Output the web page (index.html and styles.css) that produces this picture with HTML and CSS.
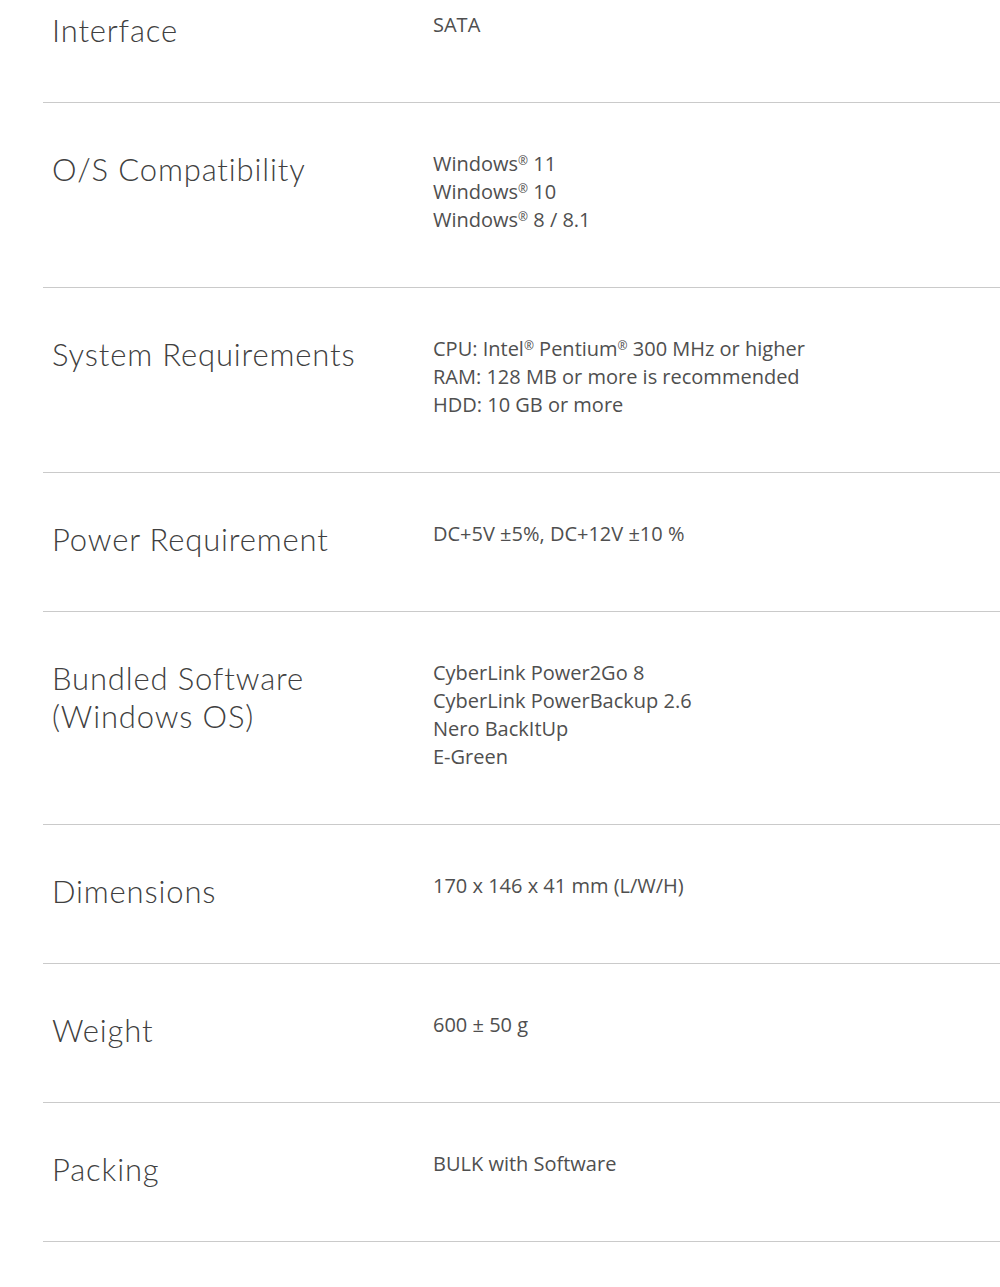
FILE: index.html
```html
<!DOCTYPE html>
<html>
<head>
<meta charset="utf-8">
<link rel="stylesheet" href="styles.css">
</head>
<body>
<div class="specs">
  <div class="row first">
    <div class="label">Interface</div>
    <div class="value">SATA</div>
  </div>
  <div class="row">
    <div class="label">O/S Compatibility</div>
    <div class="value">Windows<sup>®</sup> 11<br>Windows<sup>®</sup> 10<br>Windows<sup>®</sup> 8 / 8.1</div>
  </div>
  <div class="row">
    <div class="label">System Requirements</div>
    <div class="value">CPU: Intel<sup>®</sup> Pentium<sup>®</sup> 300 MHz or higher<br>RAM: 128 MB or more is recommended<br>HDD: 10 GB or more</div>
  </div>
  <div class="row">
    <div class="label">Power Requirement</div>
    <div class="value">DC+5V ±5%, DC+12V ±10 %</div>
  </div>
  <div class="row">
    <div class="label">Bundled Software<br>(Windows OS)</div>
    <div class="value">CyberLink Power2Go 8<br>CyberLink PowerBackup 2.6<br>Nero BackItUp<br>E-Green</div>
  </div>
  <div class="row">
    <div class="label">Dimensions</div>
    <div class="value">170 x 146 x 41 mm (L/W/H)</div>
  </div>
  <div class="row">
    <div class="label">Weight</div>
    <div class="value">600 ± 50 g</div>
  </div>
  <div class="row">
    <div class="label">Packing</div>
    <div class="value">BULK with Software</div>
  </div>
</div>
</body>
</html>
```
FILE: styles.css
```css
html, body {
  margin: 0;
  padding: 0;
  background: #fff;
  overflow: hidden;
}
.specs {
  margin: -36px 0 0 43px;
  width: 1000px;
}
.row {
  display: flex;
  align-items: flex-start;
  padding: 47px 0 53px 9px;
  border-bottom: 1px solid #cacaca;
}
.label {
  width: 381px;
  flex: none;
  font-family: Lato, "Open Sans", sans-serif;
  font-weight: 300;
  font-size: 31px;
  line-height: 38px;
  color: #404040;
  letter-spacing: 0.85px;
}
.value {
  font-family: "Open Sans", sans-serif;
  font-size: 20px;
  line-height: 28px;
  color: #4f4f4f;
  letter-spacing: 0;
}
.value sup {
  font-size: 12px;
  line-height: 0;
  vertical-align: 6px;
}
```
